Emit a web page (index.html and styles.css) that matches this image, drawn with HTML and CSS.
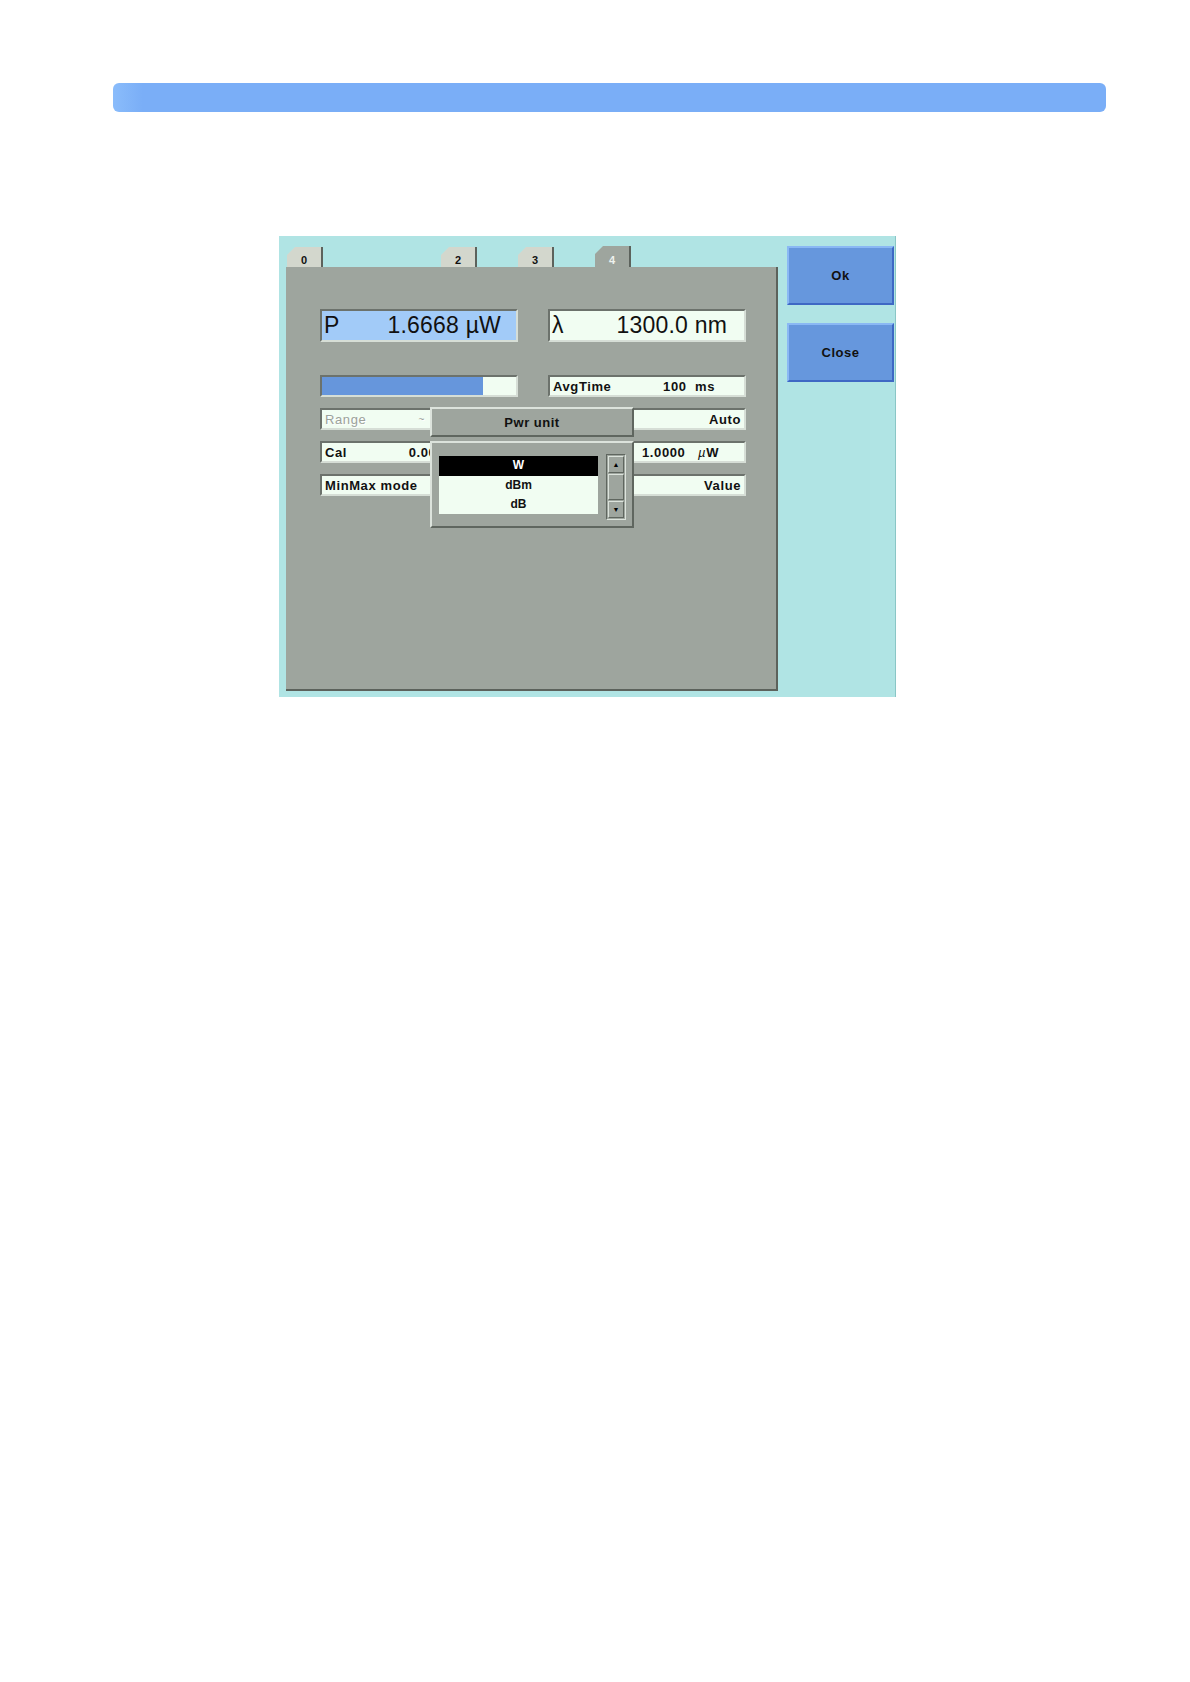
FILE: index.html
```html
<!DOCTYPE html>
<html lang="en">
<head>
  <meta charset="UTF-8">
  <title>Pwr unit</title>
  <link rel="stylesheet" href="styles.css">
</head>
<body>
  <div class="topbar"></div>

  <div class="dialog">
    <div class="main">
      <div class="tabs">
        <div class="tab">0</div>
        <div class="tab-gap"></div>
        <div class="tab">2</div>
        <div class="tab">3</div>
        <div class="tab active">4</div>
      </div>

      <div class="panel">
        <div class="grid readouts">
          <div class="field big blue"><span>P</span><span>1.6668 µW</span></div>
          <div class="field big wl"><span>λ</span><span>1300.0 nm</span></div>
        </div>

        <div class="grid">
          <div class="field bar"><div class="bar-fill" style="width: 83%"></div></div>
          <div class="field"><span>AvgTime</span><span class="val avg">100&nbsp; ms</span></div>

          <div class="field disabled"><span>Range</span><span class="val tilde">~</span></div>
          <div class="field"><span class="val">Auto</span></div>

          <div class="field"><span>Cal</span><span class="val cal">0.000 dB</span></div>
          <div class="field"><span class="val ref">1.0000 &nbsp;&nbsp;<i>µ</i>W</span></div>

          <div class="field"><span>MinMax mode</span></div>
          <div class="field"><span class="val">Value</span></div>
        </div>

        <div class="popup">
          <div class="popup-head">Pwr unit</div>
          <div class="popup-body">
            <div class="list">
              <div class="item selected">W</div>
              <div class="item">dBm</div>
              <div class="item">dB</div>
            </div>
            <div class="scroll">
              <div class="scroll-btn">▲</div>
              <div class="scroll-track"></div>
              <div class="scroll-btn">▼</div>
            </div>
          </div>
        </div>
      </div>
    </div>

    <div class="buttons">
      <button class="btn">Ok</button>
      <button class="btn">Close</button>
    </div>
  </div>
</body>
</html>
```

FILE: styles.css
```css
body {
  margin: 0;
  background: #fff;
  font-family: "Liberation Sans", Arial, sans-serif;
}

.topbar {
  margin: 83px 0 0 113px;
  width: 993px;
  height: 29px;
  border-radius: 6px;
  background: linear-gradient(to right, #8abcfb, #7aaef7 3%);
}

.dialog {
  display: flex;
  box-sizing: border-box;
  margin: 124px 0 0 279px;
  width: 617px;
  height: 461px;
  padding: 10px 0 0 7px;
  background: #b0e4e4;
  border-right: 1px solid #8ac6c6;
}

.main {
  width: 492px;
}

.tabs {
  display: flex;
  align-items: flex-end;
  gap: 41px;
  height: 21px;
  padding-left: 1px;
}

.tab,
.tab-gap {
  width: 36px;
}

.tab {
  box-sizing: border-box;
  height: 20px;
  padding: 7px 2px 0 0;
  background: #d3d7cd;
  box-shadow: inset -2px 0 0 #5c625c;
  clip-path: polygon(8px 0, 100% 0, 100% 100%, 0 100%, 0 8px);
  font-size: 11px;
  font-weight: bold;
  text-align: center;
  line-height: 12px;
  color: #111;
}

.tab.active {
  height: 21px;
  padding-top: 8px;
  background: #9ea59e;
  color: #eef2ee;
}

.panel {
  position: relative;
  box-sizing: border-box;
  height: 424px;
  padding: 42px 0 0 34px;
  background: #9ea59e;
  border-right: 2px solid #5c625c;
  border-bottom: 2px solid #5c625c;
}

.grid {
  display: grid;
  grid-template-columns: 198px 198px;
  grid-auto-rows: 22px;
  column-gap: 30px;
  row-gap: 11px;
}

.grid.readouts {
  grid-auto-rows: 33px;
  margin-bottom: 33px;
}

.field {
  display: flex;
  align-items: center;
  box-sizing: border-box;
  height: 22px;
  padding: 0 3px;
  background: #f1fdf2;
  border: 2px solid;
  border-color: #6c726c #d6ded6 #d6ded6 #6c726c;
  font-size: 13px;
  font-weight: bold;
  letter-spacing: 0.6px;
  color: #111;
  overflow: hidden;
  white-space: nowrap;
}

.field i {
  font-weight: normal;
}

.field.big {
  justify-content: space-between;
  height: 33px;
  padding: 0 15px 0 2px;
  font-size: 23px;
  font-weight: normal;
  letter-spacing: 0.2px;
}

.field.big.wl {
  padding-right: 17px;
}

.field.blue {
  background: #a2cbf8;
}

.field.bar {
  padding: 0;
  align-items: stretch;
}

.bar-fill {
  background: #6696dc;
}

.val {
  margin-left: auto;
}

.val.avg {
  padding-right: 26px;
}

.val.ref {
  padding-right: 22px;
}

.val.cal {
  padding-right: 46px;
}

.disabled {
  font-weight: normal;
  color: #9ba19b;
  text-shadow: 1px 1px 0 #ffffff;
}

.val.tilde {
  padding-right: 88px;
  font-size: 10px;
}

.popup {
  position: absolute;
  left: 144px;
  top: 140px;
  width: 204px;
  height: 121px;
  display: flex;
  flex-direction: column;
  gap: 4px;
}

.popup-head,
.popup-body {
  box-sizing: border-box;
  background: #9ea59e;
  border: 2px solid;
  border-color: #dce3dc #5f665f #5f665f #dce3dc;
}

.popup-head {
  height: 30px;
  line-height: 28px;
  text-align: center;
  font-size: 13px;
  font-weight: bold;
  letter-spacing: 0.5px;
  color: #111;
}

.popup-body {
  flex: 1;
  display: flex;
  align-items: flex-start;
  padding: 11px 0 0 7px;
}

.list {
  width: 159px;
  margin-top: 2px;
  background: #f1fdf2;
}

.item {
  height: 19px;
  line-height: 19px;
  text-align: center;
  font-size: 12px;
  font-weight: bold;
  color: #111;
}

.item.selected {
  height: 20px;
  background: #000;
  color: #fff;
}

.scroll {
  display: flex;
  flex-direction: column;
  box-sizing: border-box;
  width: 20px;
  height: 66px;
  margin-left: 8px;
  padding: 1px;
  border: 1px solid;
  border-color: #5f665f #dce3dc #dce3dc #5f665f;
}

.scroll-btn {
  box-sizing: border-box;
  height: 17px;
  border: 1px solid;
  border-color: #dce3dc #5f665f #5f665f #dce3dc;
  font-size: 7px;
  line-height: 15px;
  text-align: center;
  color: #000;
}

.scroll-track {
  flex: 1;
  margin: 1px 0;
  border: 1px solid;
  border-color: #dce3dc #5f665f #5f665f #dce3dc;
}

.buttons {
  display: flex;
  flex-direction: column;
  gap: 18px;
  margin-left: 9px;
}

.btn {
  width: 107px;
  height: 59px;
  padding: 0;
  background: #6697dd;
  border: 2px solid;
  border-color: #8ab8f4 #3e68c4 #3e68c4 #8ab8f4;
  font-family: "Liberation Sans", Arial, sans-serif;
  font-size: 13px;
  font-weight: bold;
  letter-spacing: 0.5px;
  color: #111;
  cursor: pointer;
}
```
